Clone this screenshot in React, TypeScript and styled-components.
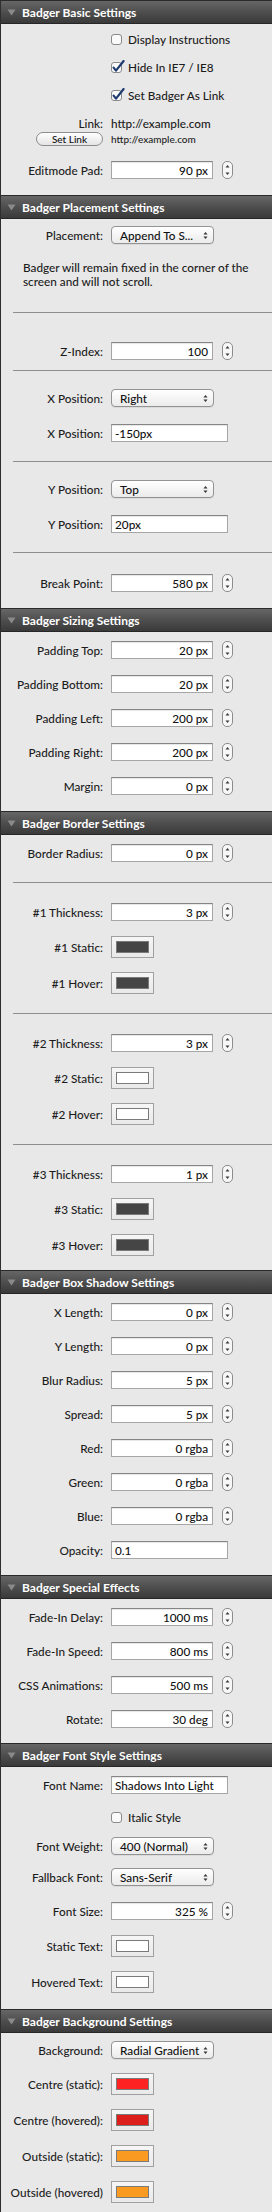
import React from "react";
import styled, { createGlobalStyle } from "styled-components";

type RowProps = { label?: string; h?: number; children: React.ReactNode };

const Row = ({ label = "", h = 34, children }: RowProps) => (
  <RowGrid $h={h}>
    <Label>{label}</Label>
    <Controls>{children}</Controls>
  </RowGrid>
);

const Stepper = () => (
  <StepperIcon width="11" height="18" viewBox="0 0 11 18">
    <rect x="0.5" y="0.5" width="10" height="17" rx="4.5" fill="#f7f7f7" stroke="#8c8c8c" />
    <polygon points="3.5,6.5 5.5,4 7.5,6.5" fill="#3c3c3c" />
    <polygon points="3.5,11.5 5.5,14 7.5,11.5" fill="#3c3c3c" />
  </StepperIcon>
);

const PopupArrows = () => (
  <svg width="5" height="9" viewBox="0 0 5 9">
    <polygon points="0.5,3.5 2.5,1 4.5,3.5" fill="#333" />
    <polygon points="0.5,5.5 2.5,8 4.5,5.5" fill="#333" />
  </svg>
);

const Disclosure = () => (
  <svg width="9" height="7" viewBox="0 0 9 7">
    <polygon points="0.5,0.5 8.5,0.5 4.5,6.5" fill="#8a8a8a" />
  </svg>
);

const CheckBox = ({ checked }: { checked?: boolean }) => (
  <svg width="14" height="14" viewBox="0 0 14 14">
    <rect x="0.5" y="2.5" width="10" height="10" rx="2.5" fill="#fafafa" stroke="#8a8a8a" />
    {checked && (
      <path d="M2.6 7.6 L5 10.6 L12.6 1" fill="none" stroke="#1f3b70" strokeWidth="2.2" strokeLinecap="round" strokeLinejoin="round" />
    )}
  </svg>
);

const NumberRow = ({ label, value }: { label: string; value: string }) => (
  <Row label={label}>
    <Field $w={102} $right>
      {value}
    </Field>
    <Stepper />
  </Row>
);

const TextRow = ({ label, value, h = 34 }: { label: string; value: string; h?: number }) => (
  <Row label={label} h={h}>
    <Field $w={117}>{value}</Field>
  </Row>
);

const SelectRow = ({ label, value, h = 30 }: { label: string; value: string; h?: number }) => (
  <Row label={label} h={h}>
    <Popup>
      <span>{value}</span>
      <PopupArrows />
    </Popup>
  </Row>
);

const ColorRow = ({ label, color }: { label: string; color: string }) => (
  <Row label={label} h={36}>
    <Well>
      <Swatch $c={color} />
    </Well>
  </Row>
);

const CheckRow = ({ label, checked, h = 28 }: { label: string; checked?: boolean; h?: number }) => (
  <Row h={h}>
    <CheckBox checked={checked} />
    <CheckText>{label}</CheckText>
  </Row>
);

const Section = ({ title, pb = 8, children }: { title: string; pb?: number; children: React.ReactNode }) => (
  <>
    <Header>
      <Disclosure />
      <span>{title}</span>
    </Header>
    <Body $pb={pb}>{children}</Body>
  </>
);

const App = () => {
  return (
    <>
      <GlobalStyle />
      <Panel>
        <Section title="Badger Basic Settings">
          <CheckRow label="Display Instructions" />
          <CheckRow label="Hide In IE7 / IE8" checked />
          <CheckRow label="Set Badger As Link" checked />
          <Row label="Link:" h={28}>
            <span>http://example.com</span>
          </Row>
          <LinkExtra>
            <SmallButton>Set Link</SmallButton>
            <SmallText>http://example.com</SmallText>
          </LinkExtra>
          <NumberRow label="Editmode Pad:" value="90 px" />
        </Section>

        <Section title="Badger Placement Settings">
          <SelectRow label="Placement:" value="Append To S..." />
          <Description>
            Badger will remain fixed in the corner of the
            <br />
            screen and will not scroll.
          </Description>
          <Separator $t={23} $b={21} />
          <NumberRow label="Z-Index:" value="100" />
          <Separator $t={2} $b={12} />
          <SelectRow label="X Position:" value="Right" />
          <Gap $h={3} />
          <TextRow label="X Position:" value="-150px" />
          <Separator $t={11} $b={12} />
          <SelectRow label="Y Position:" value="Top" />
          <Gap $h={3} />
          <TextRow label="Y Position:" value="20px" />
          <Separator $t={11} $b={13} />
          <NumberRow label="Break Point:" value="580 px" />
        </Section>

        <Section title="Badger Sizing Settings">
          <NumberRow label="Padding Top:" value="20 px" />
          <NumberRow label="Padding Bottom:" value="20 px" />
          <NumberRow label="Padding Left:" value="200 px" />
          <NumberRow label="Padding Right:" value="200 px" />
          <NumberRow label="Margin:" value="0 px" />
        </Section>

        <Section title="Badger Border Settings" pb={7}>
          <NumberRow label="Border Radius:" value="0 px" />
          <Separator />
          <NumberRow label="#1 Thickness:" value="3 px" />
          <ColorRow label="#1 Static:" color="#454545" />
          <ColorRow label="#1 Hover:" color="#454545" />
          <Separator />
          <NumberRow label="#2 Thickness:" value="3 px" />
          <ColorRow label="#2 Static:" color="#ffffff" />
          <ColorRow label="#2 Hover:" color="#ffffff" />
          <Separator />
          <NumberRow label="#3 Thickness:" value="1 px" />
          <ColorRow label="#3 Static:" color="#454545" />
          <ColorRow label="#3 Hover:" color="#454545" />
        </Section>

        <Section title="Badger Box Shadow Settings">
          <NumberRow label="X Length:" value="0 px" />
          <NumberRow label="Y Length:" value="0 px" />
          <NumberRow label="Blur Radius:" value="5 px" />
          <NumberRow label="Spread:" value="5 px" />
          <NumberRow label="Red:" value="0 rgba" />
          <NumberRow label="Green:" value="0 rgba" />
          <NumberRow label="Blue:" value="0 rgba" />
          <TextRow label="Opacity:" value="0.1" />
        </Section>

        <Section title="Badger Special Effects" pb={7}>
          <NumberRow label="Fade-In Delay:" value="1000 ms" />
          <NumberRow label="Fade-In Speed:" value="800 ms" />
          <NumberRow label="CSS Animations:" value="500 ms" />
          <NumberRow label="Rotate:" value="30 deg" />
        </Section>

        <Section title="Badger Font Style Settings" pb={9}>
          <TextRow label="Font Name:" value="Shadows Into Light" />
          <CheckRow label="Italic Style" h={30} />
          <SelectRow label="Font Weight:" value="400 (Normal)" h={28} />
          <SelectRow label="Fallback Font:" value="Sans-Serif" h={34} />
          <NumberRow label="Font Size:" value="325 %" />
          <ColorRow label="Static Text:" color="#ffffff" />
          <ColorRow label="Hovered Text:" color="#ffffff" />
        </Section>

        <Section title="Badger Background Settings">
          <SelectRow label="Background:" value="Radial Gradient" h={32} />
          <ColorRow label="Centre (static):" color="#fe2222" />
          <ColorRow label="Centre (hovered):" color="#dc1f1b" />
          <ColorRow label="Outside (static):" color="#fb9a20" />
          <ColorRow label="Outside (hovered)" color="#fb9a20" />
        </Section>
      </Panel>
    </>
  );
};

const GlobalStyle = createGlobalStyle`
  html, body {
    margin: 0;
    padding: 0;
    background: #e8e8e8;
    overflow: hidden;
  }
  body {
    font-family: Lato, "Liberation Sans", sans-serif;
    font-size: 11.75px;
    font-weight: 500;
    color: #1c1c1c;
  }
`;

const Panel = styled.div`
  width: 272px;
  box-sizing: border-box;
  border-left: 1px solid #2e2e2e;
  background: #e8e8e8;
`;

const Header = styled.div`
  height: 24px;
  box-sizing: border-box;
  display: flex;
  align-items: center;
  gap: 6px;
  padding-left: 6px;
  border-top: 1px solid #2a2a2a;
  border-bottom: 1px solid #262626;
  background: linear-gradient(#666666 0%, #4c4c4c 55%, #3a3a3a 100%);
  color: #ffffff;
  font-weight: 700;
  font-size: 12px;
`;

const Body = styled.div<{ $pb: number }>`
  display: flex;
  flex-direction: column;
  padding: 1px 0 ${(p) => p.$pb}px;
`;

const RowGrid = styled.div<{ $h: number }>`
  height: ${(p) => p.$h}px;
  display: grid;
  grid-template-columns: 102px 1fr;
  column-gap: 8px;
  align-items: center;
`;

const Label = styled.span`
  text-align: right;
  white-space: nowrap;
`;

const Controls = styled.div`
  display: flex;
  align-items: center;
  gap: 9px;
  white-space: nowrap;
`;

const Field = styled.div<{ $w: number; $right?: boolean }>`
  width: ${(p) => p.$w}px;
  height: 18px;
  box-sizing: border-box;
  display: flex;
  align-items: center;
  justify-content: ${(p) => (p.$right ? "flex-end" : "flex-start")};
  padding: 0 4px 0 3px;
  background: #ffffff;
  border: 1px solid #a6a6a6;
  border-top-color: #858585;
  box-shadow: inset 0 1px 1px rgba(0, 0, 0, 0.1);
  color: #111;
`;

const StepperIcon = styled.svg`
  display: block;
`;

const Popup = styled.div`
  width: 103px;
  height: 18px;
  box-sizing: border-box;
  display: flex;
  align-items: center;
  justify-content: space-between;
  padding: 0 5px 0 8px;
  border: 1px solid #939393;
  border-radius: 4px;
  background: linear-gradient(#ffffff, #ebebeb);
  box-shadow: 0 1px 0 rgba(0, 0, 0, 0.06);
  color: #111;
`;

const Well = styled.div`
  width: 43px;
  height: 22px;
  box-sizing: border-box;
  padding: 4px;
  border: 1px solid #a0a0a0;
  background: linear-gradient(#f6f6f6, #e9e9e9);
`;

const Swatch = styled.div<{ $c: string }>`
  width: 100%;
  height: 100%;
  box-sizing: border-box;
  border: 1px solid #7a7a7a;
  background: ${(p) => p.$c};
`;

const CheckText = styled.span`
  margin-left: -6px;
`;

const LinkExtra = styled.div`
  height: 14px;
  margin: -5px 0 7px;
  display: grid;
  grid-template-columns: 102px 1fr;
  column-gap: 8px;
  align-items: center;
`;

const SmallButton = styled.div`
  justify-self: end;
  width: 67px;
  height: 14px;
  box-sizing: border-box;
  display: flex;
  align-items: center;
  justify-content: center;
  border: 1px solid #8c8c8c;
  border-radius: 7px;
  background: linear-gradient(#ffffff, #e4e4e4);
  font-size: 10px;
  color: #111;
`;

const SmallText = styled.span`
  font-size: 10px;
`;

const Description = styled.p`
  margin: 11px 0 0;
  padding-left: 22px;
  line-height: 14px;
`;

const Separator = styled.hr<{ $t?: number; $b?: number }>`
  margin: ${(p) => p.$t ?? 12}px 0 ${(p) => p.$b ?? 12}px 12px;
  height: 1px;
  border: 0;
  background: #8e8e8e;
`;

const Gap = styled.div<{ $h: number }>`
  height: ${(p) => p.$h}px;
`;

export default App;
